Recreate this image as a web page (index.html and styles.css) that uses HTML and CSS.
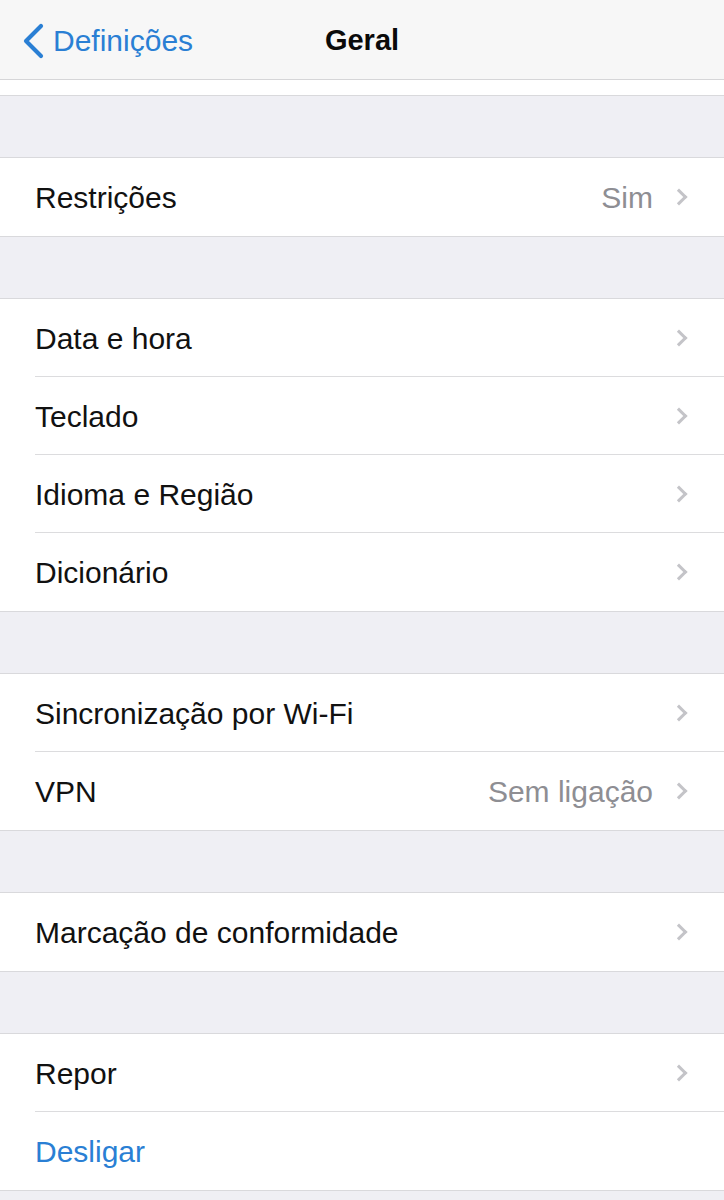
FILE: index.html
```html
<!DOCTYPE html>
<html lang="pt-PT">
<head>
    <meta charset="UTF-8">
    <meta name="viewport" content="width=device-width, initial-scale=1.0">
    <title>Geral</title>
    <link rel="stylesheet" href="styles.css">
</head>
<body>
    <div id="navbar">
        <div class="nav-back">
            <svg class="back-chevron" width="24" height="36" viewBox="0 0 24 36">
                <path d="M20 3 L5 18 L20 33" fill="none" stroke="#2a7fd4" stroke-width="4.2" stroke-linecap="round" stroke-linejoin="round"/>
            </svg>
            <span>Definições</span>
        </div>
        <div class="nav-title">Geral</div>
    </div>

    <div class="group group-top"></div>

    <div class="group">
        <div class="row">
            <div class="row-inner">
                <span class="label">Restrições</span>
                <span class="value">Sim</span>
                <span class="chevron"></span>
            </div>
        </div>
    </div>

    <div class="group">
        <div class="row">
            <div class="row-inner"><span class="label">Data e hora</span><span class="chevron"></span></div>
        </div>
        <div class="row">
            <div class="row-inner"><span class="label">Teclado</span><span class="chevron"></span></div>
        </div>
        <div class="row">
            <div class="row-inner"><span class="label">Idioma e Região</span><span class="chevron"></span></div>
        </div>
        <div class="row">
            <div class="row-inner"><span class="label">Dicionário</span><span class="chevron"></span></div>
        </div>
    </div>

    <div class="group">
        <div class="row">
            <div class="row-inner"><span class="label">Sincronização por Wi-Fi</span><span class="chevron"></span></div>
        </div>
        <div class="row">
            <div class="row-inner">
                <span class="label">VPN</span>
                <span class="value">Sem ligação</span>
                <span class="chevron"></span>
            </div>
        </div>
    </div>

    <div class="group">
        <div class="row">
            <div class="row-inner"><span class="label">Marcação de conformidade</span><span class="chevron"></span></div>
        </div>
    </div>

    <div class="group">
        <div class="row">
            <div class="row-inner"><span class="label">Repor</span><span class="chevron"></span></div>
        </div>
        <div class="row">
            <div class="row-inner"><span class="label action">Desligar</span></div>
        </div>
    </div>
</body>
</html>
```

FILE: styles.css
```css
* {
    margin: 0;
    padding: 0;
    box-sizing: border-box;
}

body {
    font-family: "Liberation Sans", Arial, sans-serif;
    background-color: #efeff4;
    color: #111;
    height: 1200px;
    overflow: hidden;
}

#navbar {
    position: relative;
    height: 80px;
    background: #f7f7f7;
    border-bottom: 1px solid #d6d6d8;
    display: flex;
    align-items: center;
    justify-content: center;
}

.nav-back {
    position: absolute;
    left: 21px;
    top: 23px;
    display: flex;
    align-items: center;
    gap: 8px;
    color: #2a7fd4;
    font-size: 30px;
}

.nav-title {
    font-size: 29px;
    font-weight: bold;
    color: #0a0a0a;
    padding-top: 2px;
}

.group {
    background: #fff;
    border-top: 1px solid #d9d9dc;
    border-bottom: 1px solid #d9d9dc;
    margin-top: 61px;
}

.group-top {
    margin-top: 0;
    border-top: none;
    height: 16px;
}

.row {
    padding-left: 35px;
    height: 78px;
}

.row-inner {
    height: 100%;
    display: flex;
    align-items: center;
    padding-right: 37px;
    padding-top: 2px;
    border-bottom: 1px solid #dcdcde;
}

.row:last-child .row-inner {
    border-bottom: none;
}

.label {
    flex: 1;
    font-size: 30px;
    color: #111;
}

.label.action {
    color: #2a7fd4;
}

.value {
    font-size: 30px;
    color: #8e8e93;
    margin-right: 20px;
}

.chevron {
    width: 12px;
    height: 12px;
    border-top: 3px solid #c4c4c8;
    border-right: 3px solid #c4c4c8;
    transform: rotate(45deg);
    margin-right: 2px;
    margin-top: -2px;
}
```
